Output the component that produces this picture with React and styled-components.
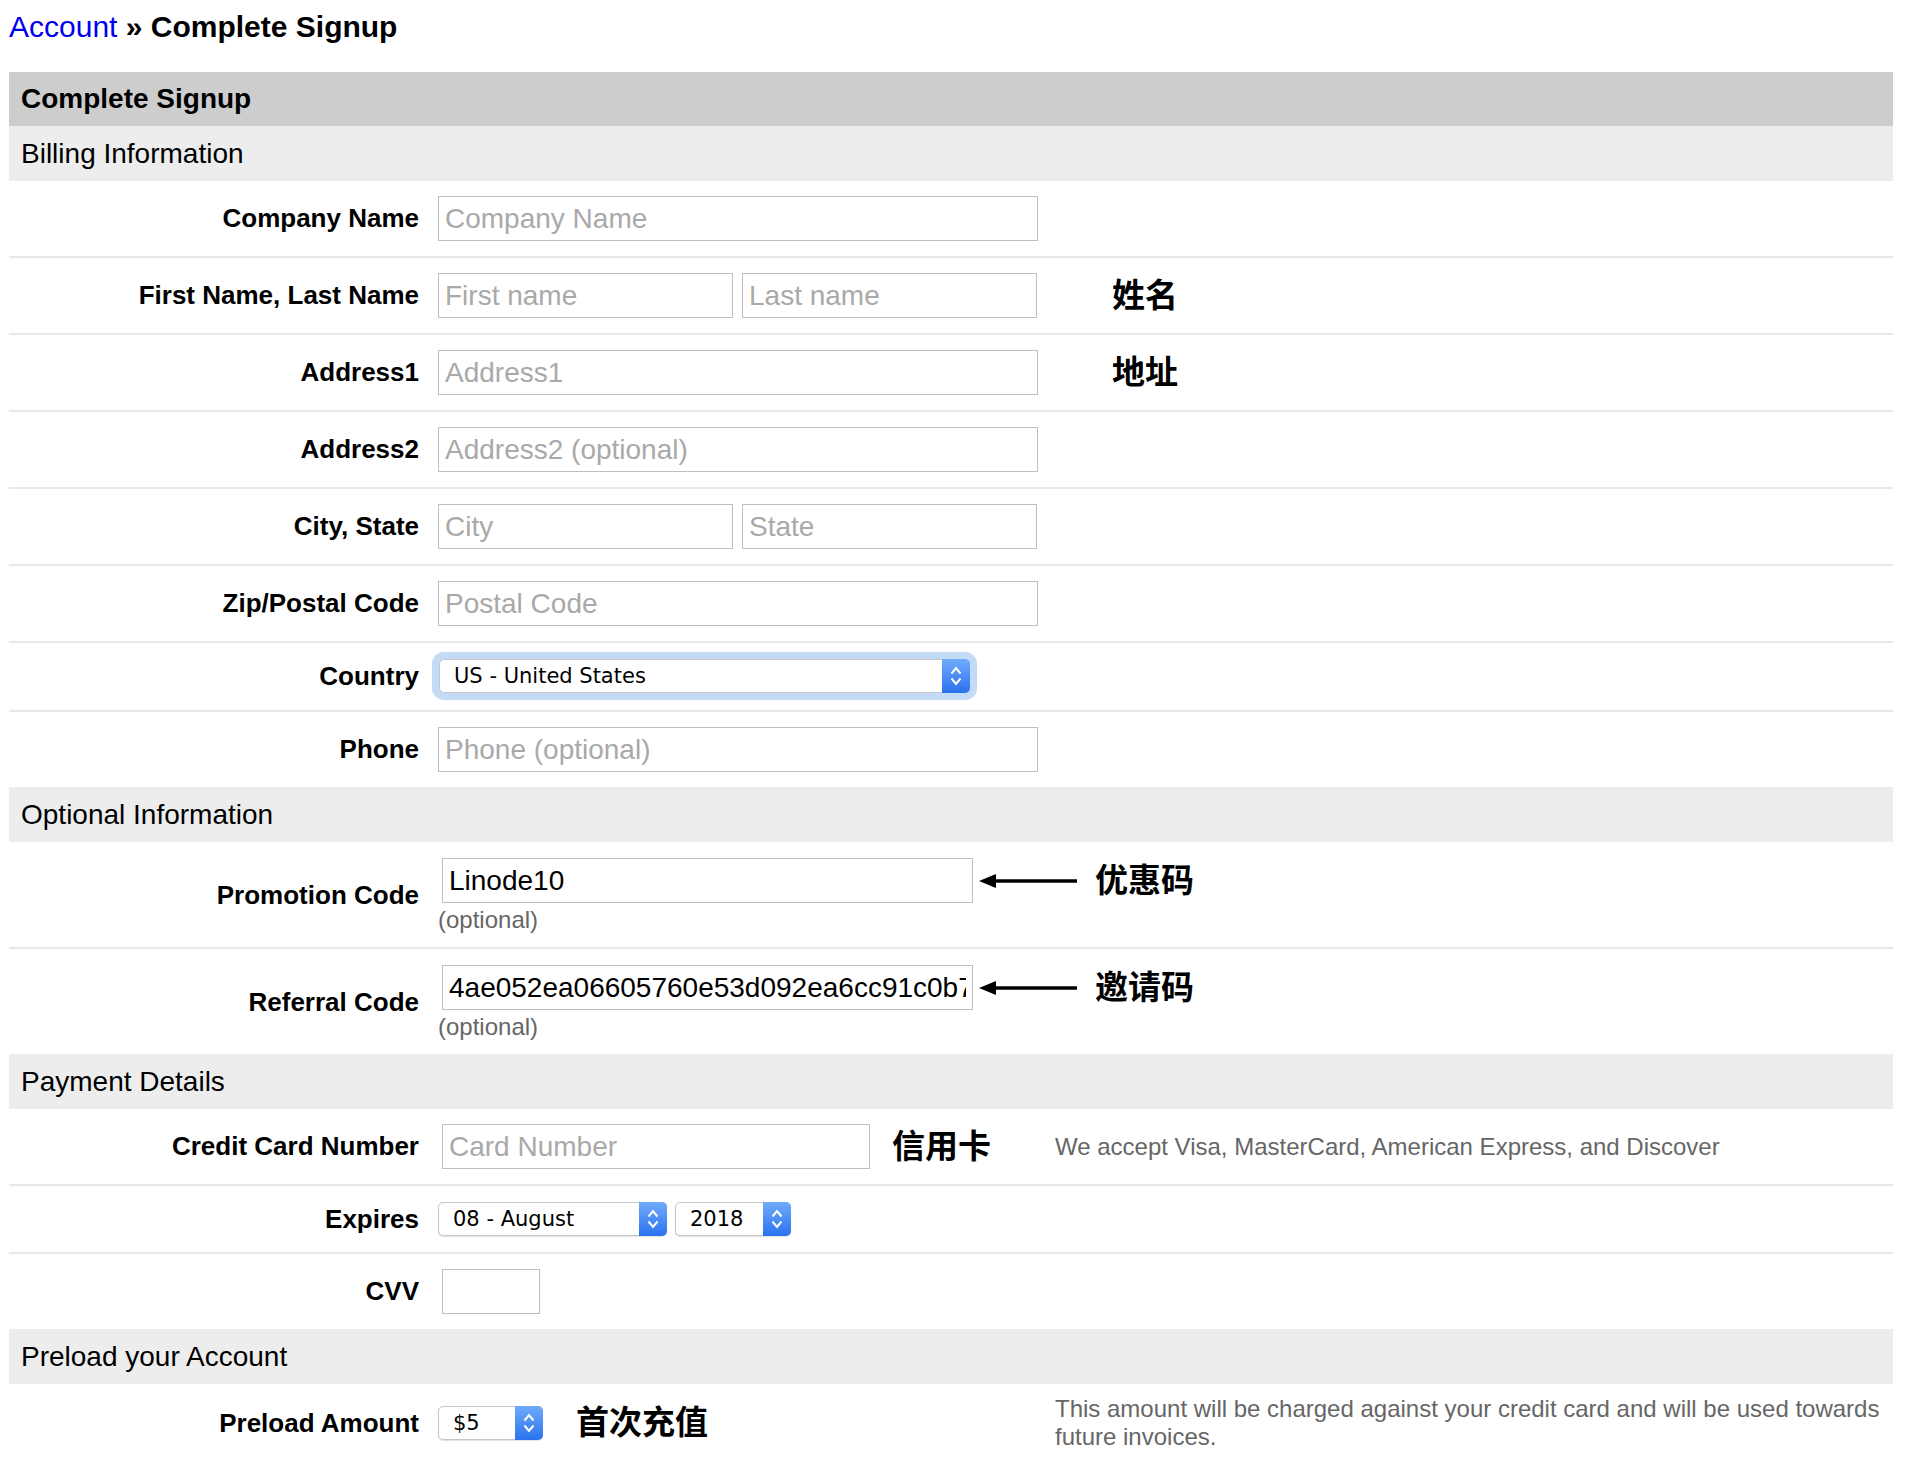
import React from 'react';
import styled, { createGlobalStyle } from 'styled-components';

/**
 * Page wide defaults.
 */
const GlobalStyle = createGlobalStyle`
	body {
		margin: 0;
		background: #fff;
		color: #000;
		font-family: "Liberation Sans", Arial, Helvetica, sans-serif;
	}
`;

/**
 * The page wrapper.
 */
const Page = styled.div`
	padding: 9px 15px 0 9px;
`;

/**
 * The breadcrumb heading.
 */
const Breadcrumb = styled.h1`
	margin: 0 0 27px;
	font-size: 30px;
	line-height: 36px;
	font-weight: bold;
`;

const CrumbLink = styled.a`
	color: #0000ee;
	font-weight: normal;
	text-decoration: none;
`;

/**
 * The form panel.
 */
const Panel = styled.form`
	display: flex;
	flex-direction: column;
`;

const PanelTitle = styled.div`
	display: flex;
	align-items: center;
	height: 54px;
	padding: 0 12px;
	background: #cdcdcd;
	font-size: 28px;
	font-weight: bold;
`;

const SectionBar = styled.div`
	display: flex;
	align-items: center;
	height: 55px;
	padding: 0 12px;
	background: #ededed;
	font-size: 28px;
`;

/**
 * A form row: label, field, help.
 */
const Row = styled.div`
	display: grid;
	grid-template-columns: 429px 617px 1fr;
	align-items: center;
	padding: ${props => props.$pad || '15px 0'};

	& + & {
		border-top: 2px solid #e8e8e8;
	}
`;

const Label = styled.label`
	padding-right: 19px;
	text-align: right;
	font-size: 26px;
	font-weight: bold;
	white-space: nowrap;
`;

const Field = styled.div`
	display: flex;
	align-items: center;
	gap: ${props => props.$gap || 0}px;
	white-space: nowrap;
`;

const FieldStack = styled.div`
	display: flex;
	flex-direction: column;
	align-items: flex-start;
`;

const TextInput = styled.input`
	box-sizing: border-box;
	width: ${props => props.$w}px;
	height: 45px;
	margin: 0 0 0 ${props => props.$indent || 0}px;
	padding: 0 6px;
	border: 1px solid #bfbfbf;
	border-radius: 0;
	background: #fff;
	color: #000;
	font-family: "Liberation Sans", Arial, sans-serif;
	font-size: 28px;
	outline: none;

	&::placeholder {
		color: #a9a9a9;
	}
`;

const Caption = styled.div`
	margin-top: 3px;
	color: #666;
	font-size: 24px;
	line-height: 27px;
`;

const Note = styled.span`
	margin-left: ${props => props.$gap || 0}px;
	padding-bottom: 6px;
	font-family: "Noto Sans CJK SC", "Liberation Sans", sans-serif;
	font-size: 33px;
	font-weight: bold;
	line-height: 36px;
	white-space: nowrap;
`;

const Help = styled.div`
	color: #666;
	font-size: 24px;
	line-height: 28px;
`;

/**
 * Mac style popup select.
 */
const SelectBox = styled.div`
	box-sizing: border-box;
	display: flex;
	width: ${props => props.$w}px;
	height: 34px;
	margin-left: ${props => props.$indent || 0}px;
	border: 1px solid #c6c6c6;
	border-radius: 5px;
	background: #fff;
	box-shadow: ${props => props.$focus
		? '0 0 0 7px #c4dbf8'
		: '0 1px 1px rgba(0, 0, 0, 0.12)'};
`;

const NativeSelect = styled.select`
	flex: 1;
	min-width: 0;
	padding: 0 0 0 14px;
	border: 0;
	background: transparent;
	color: #000;
	font-family: "DejaVu Sans", "Liberation Sans", sans-serif;
	font-size: 21px;
	appearance: none;
	outline: none;
`;

const SelectCap = styled.span`
	display: flex;
	align-items: center;
	justify-content: center;
	width: 28px;
	margin: -1px -1px -1px 0;
	border-radius: 0 5px 5px 0;
	background: linear-gradient(#70abfb, #2b72ee);
`;

const ArrowWrap = styled.span`
	display: flex;
	margin-left: 6px;
`;

function Chevrons() {
	return (
		<svg width="14" height="24" viewBox="0 0 14 24">
			<path d="M2.5 9.5 L7 4 L11.5 9.5" fill="none" stroke="#fff" strokeWidth="2" />
			<path d="M2.5 14.5 L7 20 L11.5 14.5" fill="none" stroke="#fff" strokeWidth="2" />
		</svg>
	);
}

function Select({ width, value, options, focus, indent }) {
	return (
		<SelectBox $w={width} $focus={focus} $indent={indent}>
			<NativeSelect defaultValue={value}>
				{options.map(o => <option key={o}>{o}</option>)}
			</NativeSelect>
			<SelectCap><Chevrons /></SelectCap>
		</SelectBox>
	);
}

function Arrow() {
	return (
		<ArrowWrap>
			<svg width="98" height="18" viewBox="0 0 98 18">
				<polygon points="0,9 17,2 17,16" fill="#000" />
				<line x1="15" y1="9" x2="98" y2="9" stroke="#000" strokeWidth="3.5" />
			</svg>
		</ArrowWrap>
	);
}

export default function App() {
	return (
		<Page>
			<GlobalStyle />
			<Breadcrumb>
				<CrumbLink href="#">Account</CrumbLink> » Complete Signup
			</Breadcrumb>
			<Panel onSubmit={e => e.preventDefault()}>
				<PanelTitle>Complete Signup</PanelTitle>
				<SectionBar>Billing Information</SectionBar>
				<div>
					<Row>
						<Label>Company Name</Label>
						<Field><TextInput $w={600} placeholder="Company Name" /></Field>
					</Row>
					<Row>
						<Label>First Name, Last Name</Label>
						<Field $gap={9}>
							<TextInput $w={295} placeholder="First name" />
							<TextInput $w={295} placeholder="Last name" />
						</Field>
						<Field><Note $gap={57}>姓名</Note></Field>
					</Row>
					<Row>
						<Label>Address1</Label>
						<Field><TextInput $w={600} placeholder="Address1" /></Field>
						<Field><Note $gap={57}>地址</Note></Field>
					</Row>
					<Row>
						<Label>Address2</Label>
						<Field><TextInput $w={600} placeholder="Address2 (optional)" /></Field>
					</Row>
					<Row>
						<Label>City, State</Label>
						<Field $gap={9}>
							<TextInput $w={295} placeholder="City" />
							<TextInput $w={295} placeholder="State" />
						</Field>
					</Row>
					<Row>
						<Label>Zip/Postal Code</Label>
						<Field><TextInput $w={600} placeholder="Postal Code" /></Field>
					</Row>
					<Row $pad="16px 0 17px">
						<Label>Country</Label>
						<Field>
							<Select width={531} indent={1} focus value="US - United States" options={['US - United States']} />
						</Field>
					</Row>
					<Row>
						<Label>Phone</Label>
						<Field><TextInput $w={600} placeholder="Phone (optional)" /></Field>
					</Row>
				</div>

				<SectionBar>Optional Information</SectionBar>
				<div>
					<Row $pad="16px 0 14px">
						<Label>Promotion Code</Label>
						<FieldStack>
							<Field>
								<TextInput $w={531} $indent={4} defaultValue="Linode10" />
								<Arrow />
								<Note $gap={18}>优惠码</Note>
							</Field>
							<Caption>(optional)</Caption>
						</FieldStack>
					</Row>
					<Row $pad="16px 0 14px">
						<Label>Referral Code</Label>
						<FieldStack>
							<Field>
								<TextInput $w={531} $indent={4} defaultValue="4ae052ea06605760e53d092ea6cc91c0b7f3e2a1" />
								<Arrow />
								<Note $gap={18}>邀请码</Note>
							</Field>
							<Caption>(optional)</Caption>
						</FieldStack>
					</Row>
				</div>

				<SectionBar>Payment Details</SectionBar>
				<div>
					<Row>
						<Label>Credit Card Number</Label>
						<Field>
							<TextInput $w={428} $indent={4} placeholder="Card Number" />
							<Note $gap={22}>信用卡</Note>
						</Field>
						<Help>We accept Visa, MasterCard, American Express, and Discover</Help>
					</Row>
					<Row $pad="16px 0">
						<Label>Expires</Label>
						<Field $gap={8}>
							<Select width={229} value="08 - August" options={['08 - August']} />
							<Select width={116} value="2018" options={['2018']} />
						</Field>
					</Row>
					<Row>
						<Label>CVV</Label>
						<Field><TextInput $w={98} $indent={4} /></Field>
					</Row>
				</div>

				<SectionBar>Preload your Account</SectionBar>
				<div>
					<Row $pad="11px 0">
						<Label>Preload Amount</Label>
						<Field>
							<Select width={105} value="$5" options={['$5']} />
							<Note $gap={33}>首次充值</Note>
						</Field>
						<Help>This amount will be charged against your credit card and will be used towards future invoices.</Help>
					</Row>
				</div>
			</Panel>
		</Page>
	);
}
